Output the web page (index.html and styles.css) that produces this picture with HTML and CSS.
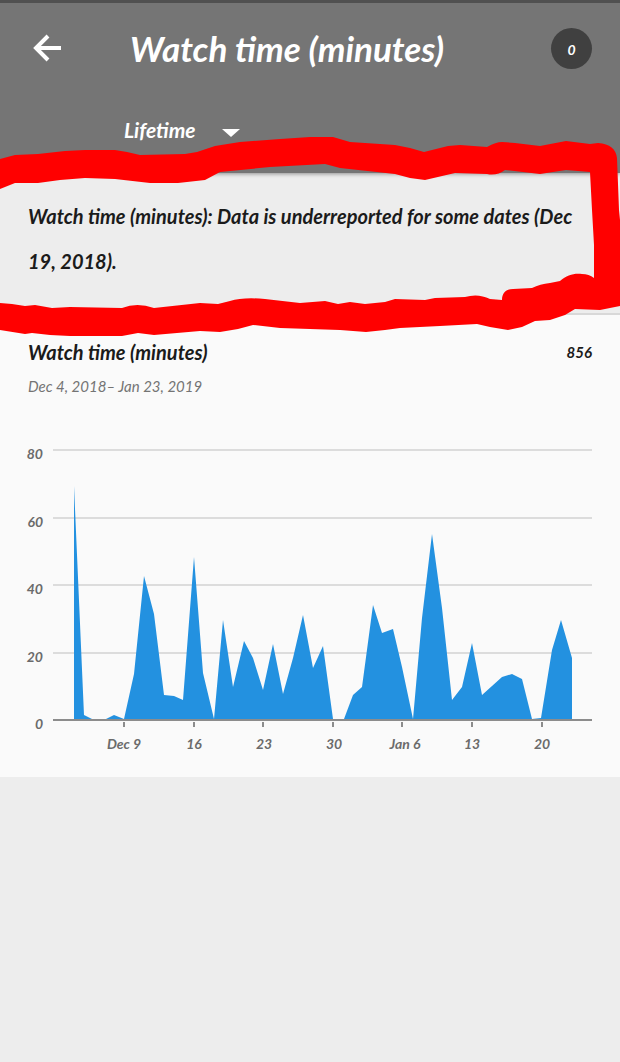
FILE: index.html
```
<!DOCTYPE html>
<html lang="en">
<head>
<meta charset="utf-8">
<meta name="viewport" content="width=device-width, initial-scale=1">
<title>Watch time (minutes)</title>
<link rel="stylesheet" href="styles.css">
</head>
<body>

<header class="appbar">
   <div class="titleRow">
      <button class="back" type="button" aria-label="Back">
         <svg width="32" height="32" viewBox="0 0 32 32" fill="none" stroke="#fff" stroke-width="4"><path d="M31 16H6M18 4L6 16L18 28"/></svg>
      </button>
      <h1>Watch time (minutes)</h1>
      <span class="badge">0</span>
   </div>
   <div class="period">
      <select aria-label="Period">
         <option>Lifetime</option>
      </select>
      <svg class="caret" width="18" height="8" viewBox="0 0 18 8"><path d="M0 0H18L9 8Z" fill="#fff"/></svg>
   </div>
</header>

<section class="notice">
   <p>Watch time (minutes): Data is underreported for some dates (Dec 19, 2018).</p>
   <!-- hand drawn marker -->
   <svg class="marker" viewBox="0 137 620 200" preserveAspectRatio="none">
      <path fill="#f00" d="M0 159L15 155L38 154L65 151L85 150L115 150L127 152L140 155L185 154L197 152L215 146L240 142L280 139L310 137L333 137L350 142L395 145L410 148L424 152L448 146L460 145L487 147Q496 142 502 142L515 143L540 146L566 141L590 144L598 143C610 144 616 149 617 158L619 210L620 220V306L600 310L575 309L565 315L550 320L535 321L522 327L508 330L490 327L477 324L440 326L400 328L385 330L366 332L340 330L310 329L280 328L253 325L238 329L220 332L200 331L154 335L138 333L122 336L70 336L50 335L32 333L25 334L0 330V303L12 304L25 306L35 305L52 308L70 307L122 308Q137 302 154 308L200 303L218 304L230 301Q243 297 265 299L300 303L325 301L338 304L350 302L365 304L385 302L395 299L425 300L435 298L465 297Q478 293 490 299L502 300C502 293 506 289 513 289L532 288Q540 284 550 283L560 281C567 275 574 273 582 274Q589 274 594 278V245L592 210L590 172L566 170L540 174L505 170Q497 176 487 174L455 173L425 180L410 178L395 174L340 168L325 164L270 167L220 172L205 180L178 183L150 183L115 179L85 178L60 180L38 183L15 183L0 189Z"/>
   </svg>
</section>

<main class="card">
   <div class="summary">
      <h2>Watch time (minutes)</h2>
      <span class="total">856</span>
   </div>
   <p class="range">Dec 4, 2018– Jan 23, 2019</p>

   <svg class="chart" viewBox="0 430 620 347" role="img" aria-label="Watch time per day">
      <g stroke="#dcdcdc" stroke-width="2">
         <path d="M53 450H592M53 518H592M53 585H592M53 653H592"/>
      </g>
      <polygon fill="#2391e0" points="74,486 84,715 92,719 106,719 114,715 124,719 134,674 144,576 154,614 164,695 174,696 183,700 194,557 203,673 214,719 223,620 233,687 244,641 253,658 263,690 273,644 283,694 293,658 303,615 313,668 323,646 333,719 344,719 353,695 362,687 373,605 382,633 393,629 402,667 413,719 422,618 432,534 442,608 452,700 462,687 472,643 482,695 492,686 502,677 512,674 522,679 532,719 541,718 552,650 561,620 572,658 572,720 74,720"/>
      <path d="M53 720H592" stroke="#8c8c8c" stroke-width="2"/>
      <path d="M124 722V727M194 722V727M263 722V727M333 722V727M402 722V727M472 722V727M542 722V727" stroke="#8c8c8c" stroke-width="2"/>
      <g class="axis" text-anchor="end">
         <text x="43" y="459">80</text>
         <text x="43" y="527">60</text>
         <text x="43" y="594">40</text>
         <text x="43" y="662">20</text>
         <text x="43" y="729">0</text>
      </g>
      <g class="axis" text-anchor="middle">
         <text x="124" y="749">Dec 9</text>
         <text x="194" y="749">16</text>
         <text x="264" y="749">23</text>
         <text x="334" y="749">30</text>
         <text x="405" y="749">Jan 6</text>
         <text x="472" y="749">13</text>
         <text x="542" y="749">20</text>
      </g>
   </svg>
</main>

</body>
</html>
```
FILE: styles.css
```
* {
    box-sizing: border-box;
}

body {
    margin: 0;
    background: #ededed;
    color: #1b1b1b;
    font-family: Lato, "Open Sans", sans-serif;
    font-style: italic;
}

h1, h2, p {
    margin: 0;
}

.appbar {
    position: relative;
    height: 173px;
    padding: 20px 28px 0;
    background: #757575;
    border-top: 3px solid #505050;
    color: #fff;
    box-shadow: 0 1px 4px rgba(0, 0, 0, 0.4);
}

.titleRow {
    display: flex;
    align-items: center;
    height: 50px;
}

.back {
    width: 102px;
    height: 32px;
    padding: 0 2px;
    background: none;
    border: 0;
    text-align: left;
}

.back svg {
    display: block;
}

h1 {
    flex: 1;
    font-size: 35px;
    line-height: 50px;
    font-weight: bold;
    white-space: nowrap;
}

.badge {
    width: 41px;
    height: 41px;
    border-radius: 50%;
    background: #404040;
    font-size: 14px;
    font-weight: bold;
    line-height: 43px;
    text-align: center;
}

.period {
    display: flex;
    align-items: center;
    margin: 40px 0 0 96px;
}

.period select {
    width: 116px;
    margin-right: -18px;
    padding: 0;
    appearance: none;
    background: none;
    border: 0;
    color: #fff;
    font: inherit;
    font-size: 21px;
    font-weight: bold;
    line-height: 34px;
}

.caret {
    pointer-events: none;
    margin-top: 6px;
}

.notice {
    position: relative;
    padding: 21px 28px 29px;
    border-bottom: 2px solid #d8d8d8;
}

.notice p {
    font-size: 20px;
    font-weight: bold;
    line-height: 45px;
}

/* runs over the edges of the notice */
.marker {
    position: absolute;
    left: 0;
    top: -36px;
    width: 100%;
    height: 200px;
    pointer-events: none;
}

.card {
    padding-top: 20px;
    background: #fafafa;
}

.summary {
    display: flex;
    justify-content: space-between;
    padding: 0 28px;
    line-height: 34px;
}

h2 {
    font-size: 20px;
    font-weight: bold;
}

.total {
    font-size: 15px;
    font-weight: bold;
}

.range {
    padding: 0 28px;
    color: #747474;
    font-size: 15px;
    line-height: 34px;
}

.chart {
    display: block;
    width: 100%;
    margin-top: 27px;
}

.axis {
    fill: #6b6b6b;
    font-size: 14px;
    font-weight: bold;
}
```
